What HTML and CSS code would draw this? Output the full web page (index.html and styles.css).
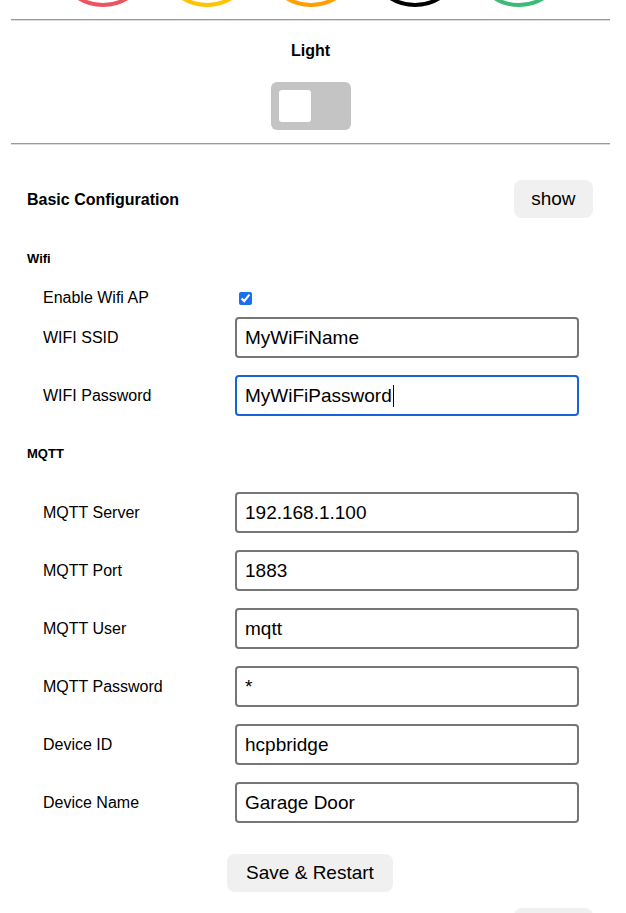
FILE: index.html
```html
<!DOCTYPE html>
<html lang="en">
<head>
<meta charset="utf-8">
<title>HCP Bridge</title>
<link rel="stylesheet" href="styles.css">
</head>
<body>
<div class="page">
  <div class="status">
    <span class="dot dot-red"></span>
    <span class="dot dot-yellow"></span>
    <span class="dot dot-orange"></span>
    <span class="dot dot-black"></span>
    <span class="dot dot-green"></span>
  </div>
  <hr class="rule">
  <div class="light">
    <h4 class="light-title">Light</h4>
    <div class="toggle"><span class="knob"></span></div>
  </div>
  <hr class="rule rule-second">

  <section class="config">
    <div class="config-head">
      <h4 class="config-title">Basic Configuration</h4>
      <button class="btn" type="button">show</button>
    </div>

    <h5 class="group-title group-wifi">Wifi</h5>
    <div class="rows rows-wifi">
      <div class="row row-check">
        <label class="row-label" for="ap">Enable Wifi AP</label>
        <input class="check" id="ap" type="checkbox" checked>
      </div>
      <div class="row row-field">
        <label class="row-label" for="ssid">WIFI SSID</label>
        <input class="field" id="ssid" type="text" value="MyWiFiName">
      </div>
      <div class="row row-field">
        <label class="row-label" for="wpass">WIFI Password</label>
        <div class="field field-focus"><span class="field-text">MyWiFiPassword</span><span class="caret"></span></div>
      </div>
    </div>

    <h5 class="group-title group-mqtt">MQTT</h5>
    <div class="rows rows-mqtt">
      <div class="row row-field">
        <label class="row-label" for="server">MQTT Server</label>
        <input class="field" id="server" type="text" value="192.168.1.100">
      </div>
      <div class="row row-field">
        <label class="row-label" for="port">MQTT Port</label>
        <input class="field" id="port" type="text" value="1883">
      </div>
      <div class="row row-field">
        <label class="row-label" for="user">MQTT User</label>
        <input class="field" id="user" type="text" value="mqtt">
      </div>
      <div class="row row-field">
        <label class="row-label" for="mpass">MQTT Password</label>
        <input class="field" id="mpass" type="text" value="*">
      </div>
      <div class="row row-field">
        <label class="row-label" for="devid">Device ID</label>
        <input class="field" id="devid" type="text" value="hcpbridge">
      </div>
      <div class="row row-field">
        <label class="row-label" for="devname">Device Name</label>
        <input class="field" id="devname" type="text" value="Garage Door">
      </div>
    </div>

    <div class="actions">
      <button class="btn btn-wide" type="button">Save &amp; Restart</button>
    </div>
  </section>

  <section class="config config-next">
    <div class="config-head config-head-end">
      <button class="btn btn-peek" type="button" aria-label="show"></button>
    </div>
  </section>
</div>
</body>
</html>
```

FILE: styles.css
```css
html, body {
  margin: 0;
  padding: 0;
  background: #ffffff;
  overflow: hidden;
}

body {
  font-family: "Liberation Sans", Arial, Helvetica, sans-serif;
  color: #000;
}

.page {
  margin: 0 16px 0 11px;
}

/* status circles (partially scrolled out of view) */
.status {
  display: flex;
  justify-content: center;
  gap: 8px;
  margin-top: -89px;
  height: 96px;
}

.dot {
  box-sizing: border-box;
  width: 96px;
  height: 96px;
  border-radius: 50%;
  border: 4px solid #000;
}

.dot-red { border-color: #ec5461; }
.dot-yellow { border-color: #ffc300; }
.dot-orange { border-color: #ff9f00; }
.dot-black { border-color: #000000; }
.dot-green { border-color: #3dba78; }

.rule {
  margin: 12px 0 0;
  border: 0;
  border-top: 1px solid #9a9a9a;
  border-bottom: 1px solid #dcdcdc;
  height: 0;
}

.rule-second {
  margin-top: 13px;
}

/* light switch */
.light {
  display: flex;
  flex-direction: column;
  align-items: center;
}

.light-title {
  margin: 20px 0 0;
  font-size: 16px;
  line-height: 20px;
  font-weight: bold;
}

.toggle {
  margin-top: 21px;
  width: 80px;
  height: 48px;
  border-radius: 6px;
  background: #c4c4c4;
  box-sizing: border-box;
  padding: 8px;
}

.knob {
  display: block;
  width: 32px;
  height: 32px;
  border-radius: 3px;
  background: #ffffff;
}

/* configuration */
.config {
  padding: 0 16px;
}

.config-head {
  margin-top: 35px;
  height: 38px;
  display: flex;
  align-items: center;
  justify-content: space-between;
}

.config-head-end {
  justify-content: flex-end;
}

.config-title {
  margin: 1px 0 0;
  font-size: 16px;
  line-height: 20px;
  font-weight: bold;
}

.btn {
  height: 38px;
  padding: 0 17.5px;
  border: 0;
  border-radius: 8px;
  background: #f0f0f0;
  font-family: "Liberation Sans", Arial, Helvetica, sans-serif;
  font-size: 19px;
  color: #000;
  margin-right: 1px;
}

.btn-wide {
  padding: 0 19px;
}

.btn-peek {
  width: 79px;
}

.group-title {
  margin: 0;
  font-size: 13px;
  line-height: 16px;
  font-weight: bold;
}

.group-wifi { margin-top: 33px; }
.group-mqtt { margin-top: 30px; }

.rows {
  display: flex;
  flex-direction: column;
  padding-left: 16px;
}

.rows-wifi { margin-top: 20px; }
.rows-mqtt { margin-top: 30px; }

.row {
  display: grid;
  grid-template-columns: 192px 344px;
  align-items: center;
}

.row-check {
  height: 22px;
  margin-bottom: 8px;
}

.row-field {
  height: 41px;
}

.row-field + .row-field {
  margin-top: 17px;
}

.row-label {
  font-size: 16px;
  line-height: 20px;
}

.check {
  margin: 1px 0 0 4px;
  width: 13px;
  height: 13px;
  accent-color: #1a6ef0;
}

.field {
  box-sizing: border-box;
  width: 344px;
  height: 41px;
  margin: 0;
  padding: 0 8px;
  border: 2px solid #767676;
  border-radius: 4px;
  background: #fff;
  font-family: "Liberation Sans", Arial, Helvetica, sans-serif;
  font-size: 19px;
  color: #000;
  outline: none;
}

.field-focus {
  display: flex;
  align-items: center;
  border-color: #1565d8;
}

.field-text {
  line-height: 22px;
}

.caret {
  display: block;
  width: 1px;
  height: 22px;
  background: #000;
  margin-left: 1px;
}

.actions {
  margin-top: 31px;
  display: flex;
  justify-content: center;
}

.config-next .config-head {
  margin-top: 16px;
}
```
